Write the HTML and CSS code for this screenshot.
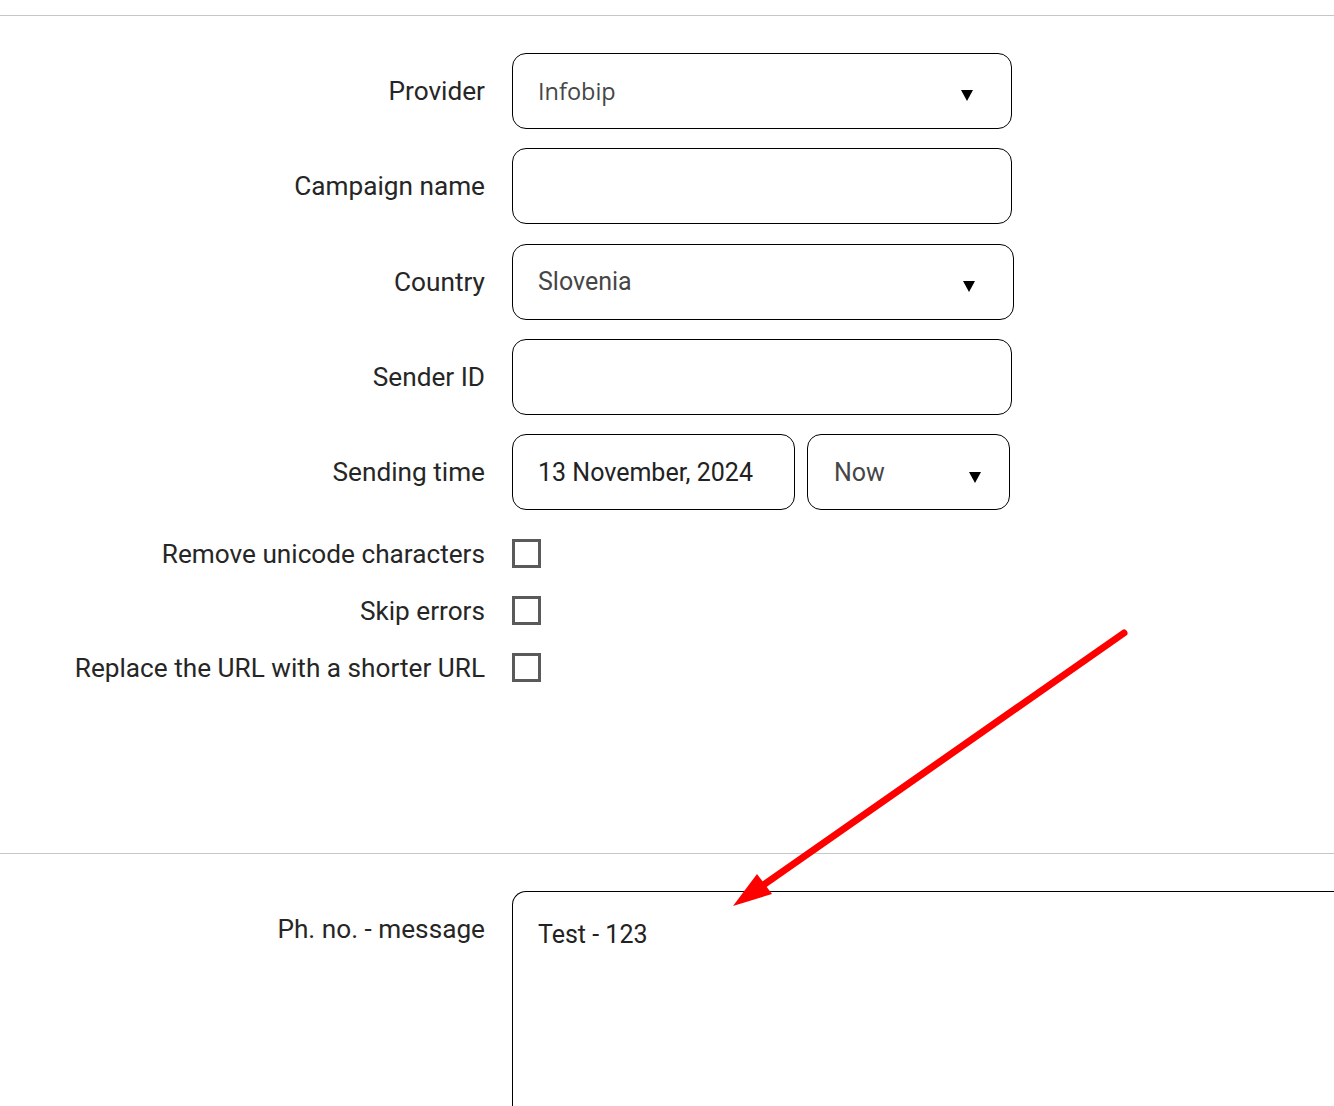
FILE: index.html
```html
<!DOCTYPE html>
<html lang="en">
<head>
<meta charset="utf-8">
<title>SMS campaign</title>
<link rel="stylesheet" href="styles.css">
</head>
<body>
<div class="page">
  <hr class="sep sep-top">
  <form class="form">
    <div class="row">
      <label class="label">Provider</label>
      <div class="field select w500 font-open">Infobip<svg class="caret" width="12" height="11" viewBox="0 0 12 11"><polygon points="0,0 12,0 6,11" fill="#000"/></svg></div>
    </div>
    <div class="row">
      <label class="label">Campaign name</label>
      <div class="field w500"></div>
    </div>
    <div class="row">
      <label class="label">Country</label>
      <div class="field select w502">Slovenia<svg class="caret" width="12" height="11" viewBox="0 0 12 11"><polygon points="0,0 12,0 6,11" fill="#000"/></svg></div>
    </div>
    <div class="row">
      <label class="label">Sender ID</label>
      <div class="field w500"></div>
    </div>
    <div class="row">
      <label class="label">Sending time</label>
      <div class="pair">
        <div class="field date">13 November, 2024</div>
        <div class="field select now">Now<svg class="caret" width="12" height="11" viewBox="0 0 12 11"><polygon points="0,0 12,0 6,11" fill="#000"/></svg></div>
      </div>
    </div>
    <div class="checks">
      <div class="crow">
        <label class="label">Remove unicode characters</label>
        <span class="box"></span>
      </div>
      <div class="crow">
        <label class="label">Skip errors</label>
        <span class="box"></span>
      </div>
      <div class="crow">
        <label class="label">Replace the URL with a shorter URL</label>
        <span class="box"></span>
      </div>
    </div>
  </form>
  <hr class="sep sep-mid">
  <div class="msg-row">
    <label class="label msg-label">Ph. no. - message</label>
    <div class="textarea">Test - 123</div>
  </div>
</div>
<svg class="annot" width="1334" height="1106" viewBox="0 0 1334 1106">
  <line x1="1124" y1="633" x2="762" y2="886" stroke="#ff0000" stroke-width="7" stroke-linecap="round"/>
  <polygon points="733,906 757,874 772,894" fill="#ff0000"/>
</svg>
</body>
</html>
```

FILE: styles.css
```css
html, body {
  margin: 0;
  padding: 0;
  overflow: hidden;
  background: #fff;
}
body {
  font-family: Roboto, "Liberation Sans", sans-serif;
  color: #222;
  width: 1334px;
  height: 1106px;
  position: relative;
}
.page {
  padding-top: 15px;
}
.sep {
  margin: 0;
  border: 0;
  height: 1px;
  background: #c6c6c6;
}
.form {
  margin-top: 37px;
  display: flex;
  flex-direction: column;
  gap: 19.25px;
}
.row {
  display: flex;
  align-items: center;
  gap: 27px;
}
.label {
  width: 485px;
  flex: none;
  text-align: right;
  font-size: 26.2px;
  color: #262626;
}
.field {
  box-sizing: border-box;
  height: 76px;
  border: 1px solid #000;
  border-radius: 14px;
  padding: 0 25px;
  display: flex;
  align-items: center;
  font-size: 25px;
  color: #222;
  position: relative;
}
.w500 { width: 500px; }
.w502 { width: 502px; }
.select { color: #464646; }
.font-open {
  font-family: "Open Sans", "Noto Sans", sans-serif;
  font-size: 23.5px;
}
.caret {
  position: absolute;
  right: 38px;
  top: 36px;
}
.pair {
  display: flex;
  gap: 12px;
}
.date { width: 283px; }
.now { width: 203px; padding-left: 26px; }
.now .caret { right: 28px; top: 37px; }
.checks {
  margin-top: 9.75px;
  display: flex;
  flex-direction: column;
  gap: 28px;
}
.crow {
  display: flex;
  align-items: center;
  gap: 27px;
  height: 29px;
}
.box {
  box-sizing: border-box;
  width: 29px;
  height: 29px;
  border: 3px solid #5a5a5a;
}
.sep-mid {
  margin-top: 171px;
}
.msg-row {
  margin-top: 37px;
  display: flex;
  align-items: flex-start;
  gap: 27px;
}
.msg-label {
  padding-top: 23px;
}
.textarea {
  box-sizing: border-box;
  width: 822px;
  height: 216px;
  flex: none;
  border: 1px solid #000;
  border-right: 0;
  border-bottom: 0;
  border-radius: 14px 0 0 0;
  padding: 28px 25px;
  font-size: 25px;
  color: #222;
}
.annot {
  position: absolute;
  left: 0;
  top: 0;
  pointer-events: none;
}
```
